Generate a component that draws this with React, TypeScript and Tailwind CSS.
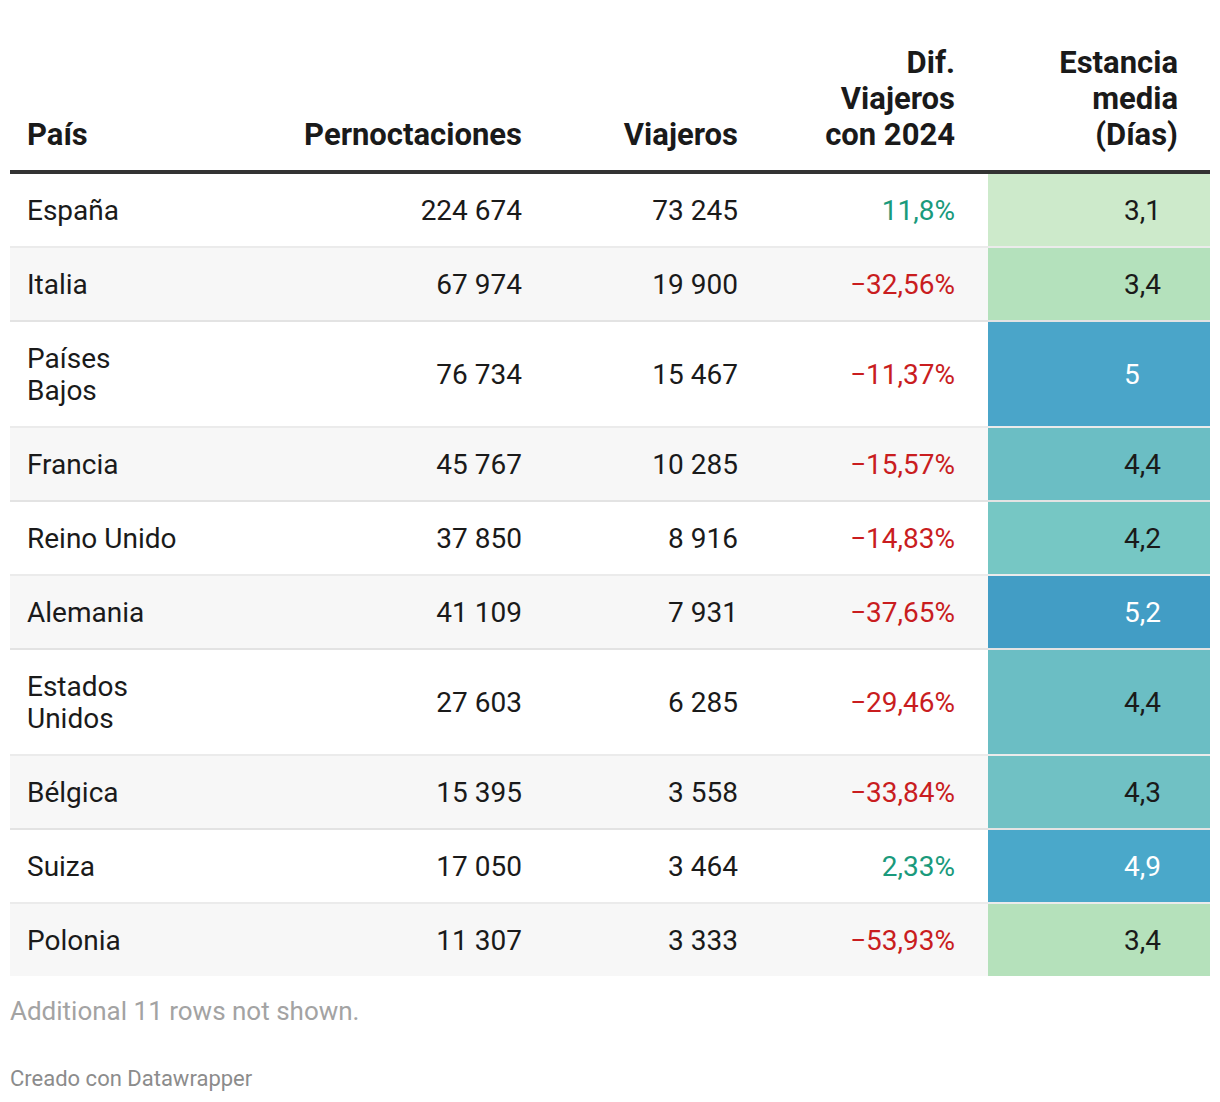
import React from "react";

type Row = {
  country: string[];
  nights: string;
  travellers: string;
  diff: string;
  up: boolean;
  stay: string;
  pad?: boolean;
  bg: string;
  light?: boolean;
};

const rows: Row[] = [
  { country: ["España"], nights: "224 674", travellers: "73 245", diff: "11,8%", up: true, stay: "3,1", bg: "bg-[#cdeacb]" },
  { country: ["Italia"], nights: "67 974", travellers: "19 900", diff: "−32,56%", up: false, stay: "3,4", bg: "bg-[#b4e1bc]" },
  { country: ["Países", "Bajos"], nights: "76 734", travellers: "15 467", diff: "−11,37%", up: false, stay: "5", pad: true, bg: "bg-[#4aa5c9]", light: true },
  { country: ["Francia"], nights: "45 767", travellers: "10 285", diff: "−15,57%", up: false, stay: "4,4", bg: "bg-[#6bbec4]" },
  { country: ["Reino Unido"], nights: "37 850", travellers: "8 916", diff: "−14,83%", up: false, stay: "4,2", bg: "bg-[#76c7c4]" },
  { country: ["Alemania"], nights: "41 109", travellers: "7 931", diff: "−37,65%", up: false, stay: "5,2", bg: "bg-[#429dc5]", light: true },
  { country: ["Estados", "Unidos"], nights: "27 603", travellers: "6 285", diff: "−29,46%", up: false, stay: "4,4", bg: "bg-[#6bbec4]" },
  { country: ["Bélgica"], nights: "15 395", travellers: "3 558", diff: "−33,84%", up: false, stay: "4,3", bg: "bg-[#70c1c4]" },
  { country: ["Suiza"], nights: "17 050", travellers: "3 464", diff: "2,33%", up: true, stay: "4,9", bg: "bg-[#4aa8ca]", light: true },
  { country: ["Polonia"], nights: "11 307", travellers: "3 333", diff: "−53,93%", up: false, stay: "3,4", bg: "bg-[#b5e1bb]" },
];

const cols = "grid grid-cols-[190px_355px_216px_217px_222px]";

export default function App() {
  return (
    <div className="w-[1220px] bg-white px-[10px] pt-[45px] font-['Roboto',sans-serif] text-[#1a1a1a]">
      <div className={`${cols} items-end border-b-4 border-[#333333] pb-[17px] text-[31px] font-bold leading-[36px]`}>
        <div className="pl-[17px]">País</div>
        <div className="pr-[33px] text-right">Pernoctaciones</div>
        <div className="pr-[33px] text-right">Viajeros</div>
        <div className="pr-[33px] text-right whitespace-nowrap">
          Dif.
          <br />
          Viajeros
          <br />
          con 2024
        </div>
        <div className="pr-[32px] text-right">
          Estancia
          <br />
          media
          <br />
          (Días)
        </div>
      </div>

      <div className="text-[28px] leading-[32px]">
        {rows.map((r, i) => (
          <div
            key={r.country.join(" ")}
            className={`${cols} ${i % 2 === 1 ? "bg-[#f7f7f7]" : "bg-white"} ${
              i < rows.length - 1 ? "border-b-2 border-black/[0.08]" : ""
            }`}
          >
            <div className="pt-[21px] pb-[19px] pl-[17px] whitespace-nowrap">
              {r.country.map((c, k) => (
                <div key={k}>{c}</div>
              ))}
            </div>
            <div className="flex items-center justify-end pt-[2px] pr-[33px]">{r.nights}</div>
            <div className="flex items-center justify-end pt-[2px] pr-[33px]">{r.travellers}</div>
            <div
              className={`flex items-center justify-end pt-[2px] pr-[33px] ${
                r.up ? "text-[#1a9a7c]" : "text-[#c91d1f]"
              }`}
            >
              {r.diff}
            </div>
            <div
              className={`flex items-center justify-end pt-[2px] pr-[49px] ${r.bg} ${
                r.light ? "text-white" : "text-[#1a1a1a]"
              }`}
            >
              {r.stay}
              {r.pad && <span className="invisible">,0</span>}
            </div>
          </div>
        ))}
      </div>

      <div className="pt-[20px] text-[26px] leading-[30px] text-[#a3a3a3]">
        Additional 11 rows not shown.
      </div>
      <div className="pt-[40px] pb-[12px] text-[22px] leading-[26px] text-[#8c8c8c]">
        Creado con Datawrapper
      </div>
    </div>
  );
}
